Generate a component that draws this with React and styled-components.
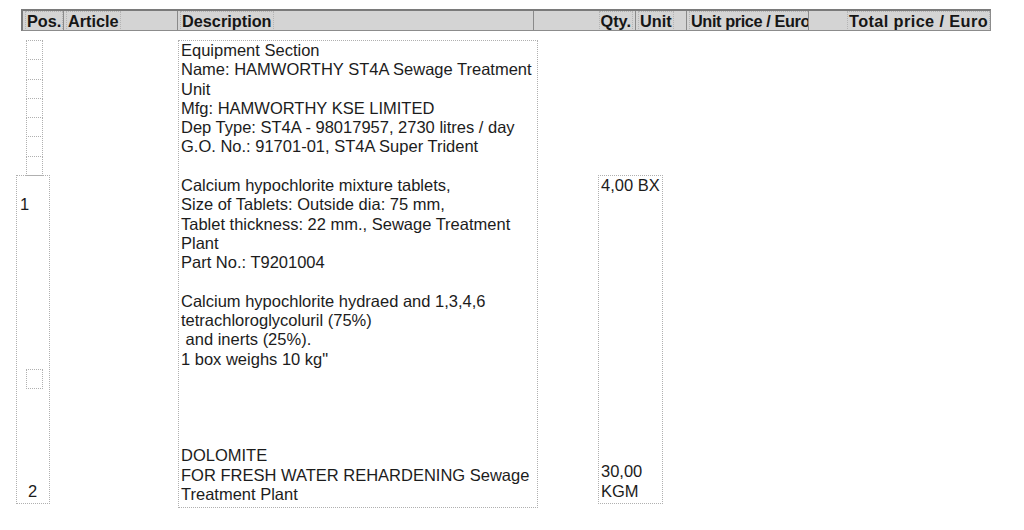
import React from 'react';
import styled, { createGlobalStyle } from 'styled-components';

const GlobalStyle = createGlobalStyle`
  html, body {
    margin: 0;
    padding: 0;
    background: #ffffff;
  }
  body {
    font-family: "Liberation Sans", Arial, sans-serif;
    color: #1c1c1c;
  }
`;

const Page = styled.div`
  width: 1024px;
  height: 530px;
  padding-top: 9px;
  box-sizing: border-box;
  overflow: hidden;
`;

/* Column header bar */
const HeaderBar = styled.div`
  display: grid;
  grid-template-columns: 41px 114px 356px 102px 51px 122px 183px;
  margin-left: 21px;
  width: 970px;
  height: 22px;
  box-sizing: border-box;
  background: #d4d4d4;
  border: 1px solid #8c8c8c;
  border-top: 2px solid #7a7a7a;
  border-left: 2px solid #7a7a7a;
`;

const HeaderCell = styled.div`
  display: flex;
  align-items: center;
  justify-content: ${p => (p.$right ? 'flex-end' : 'flex-start')};
  padding: 0 ${p => (p.$right ? '3px' : '0')} 0 ${p => (p.$right ? '0' : '3px')};
  border-right: ${p => (p.$last ? 'none' : '1px solid #8a8a8a')};
  overflow: hidden;
  min-width: 0;
`;

const HeaderLabel = styled.span`
  font-size: 16.3px;
  font-weight: 700;
  line-height: 18px;
  padding: 0 1px;
  white-space: nowrap;
  outline: 1px dotted #b4b4b4;
  outline-offset: 0;
  letter-spacing: ${p => p.$spacing || '0'};
  color: #161616;
`;

/* Body rows */
const Body = styled.div`
  display: flex;
  align-items: flex-start;
  margin-top: 9px;
  padding-left: 16px;
  font-size: 16.5px;
  line-height: 19.3px;
`;

const PosColumn = styled.div`
  display: flex;
  flex-direction: column;
  width: 34px;
`;

const MarkerBox = styled.div`
  width: 17px;
  height: 20.3px;
  margin-left: 10px;
  margin-bottom: -1px;
  box-sizing: border-box;
  border: 1px dotted #b0b0b0;
`;

const PosBox = styled.div`
  display: flex;
  flex-direction: column;
  height: 329px;
  box-sizing: border-box;
  border: 1px dotted #b0b0b0;
`;

const PosNumber = styled.div`
  margin-top: 19px;
  margin-left: 3px;
`;

const InnerMarker = styled.div`
  width: 17px;
  height: 20px;
  box-sizing: border-box;
  margin: 155px 0 0 9px;
  border: 1px dotted #b0b0b0;
`;

const PosBottom = styled.div`
  margin-top: auto;
  margin-left: 11px;
  margin-bottom: 2px;
`;

const DescBox = styled.div`
  margin-left: 128px;
  width: 360px;
  height: 468px;
  box-sizing: border-box;
  border: 1px dotted #b0b0b0;
  padding-left: 2px;
  white-space: pre;
  overflow: hidden;
`;

const QtyBox = styled.div`
  display: flex;
  flex-direction: column;
  justify-content: space-between;
  margin-left: 60px;
  margin-top: 135px;
  width: 65px;
  height: 329px;
  box-sizing: border-box;
  border: 1px dotted #b0b0b0;
  padding: 0 0 2px 2px;
  white-space: pre;
`;

const columns = [
  { label: 'Pos.' },
  { label: 'Article' },
  { label: 'Description' },
  { label: 'Qty.', right: true },
  { label: 'Unit' },
  { label: 'Unit price / Euro', spacing: '-0.4px' },
  { label: 'Total price / Euro', right: true, last: true, spacing: '0.4px' },
];

const description = [
  'Equipment Section',
  'Name: HAMWORTHY ST4A Sewage Treatment',
  'Unit',
  'Mfg: HAMWORTHY KSE LIMITED',
  'Dep Type: ST4A - 98017957, 2730 litres / day',
  'G.O. No.: 91701-01, ST4A Super Trident',
  '',
  'Calcium hypochlorite mixture tablets,',
  'Size of Tablets: Outside dia: 75 mm,',
  'Tablet thickness: 22 mm., Sewage Treatment',
  'Plant',
  'Part No.: T9201004',
  '',
  'Calcium hypochlorite hydraed and 1,3,4,6',
  'tetrachloroglycoluril (75%)',
  ' and inerts (25%).',
  '1 box weighs 10 kg"',
  '',
  '',
  '',
  '',
  'DOLOMITE',
  'FOR FRESH WATER REHARDENING Sewage',
  'Treatment Plant',
];

export default function App() {
  return (
    <Page>
      <GlobalStyle />
      <HeaderBar>
        {columns.map((c, i) => (
          <HeaderCell key={i} $right={c.right} $last={c.last}>
            <HeaderLabel $spacing={c.spacing}>{c.label}</HeaderLabel>
          </HeaderCell>
        ))}
      </HeaderBar>

      <Body>
        <PosColumn>
          {Array.from({ length: 7 }).map((_, i) => (
            <MarkerBox key={i} />
          ))}
          <PosBox>
            <PosNumber>1</PosNumber>
            <InnerMarker />
            <PosBottom>2</PosBottom>
          </PosBox>
        </PosColumn>

        <DescBox>{description.join('\n')}</DescBox>

        <QtyBox>
          <div>4,00 BX</div>
          <div>{'30,00\nKGM'}</div>
        </QtyBox>
      </Body>
    </Page>
  );
}
